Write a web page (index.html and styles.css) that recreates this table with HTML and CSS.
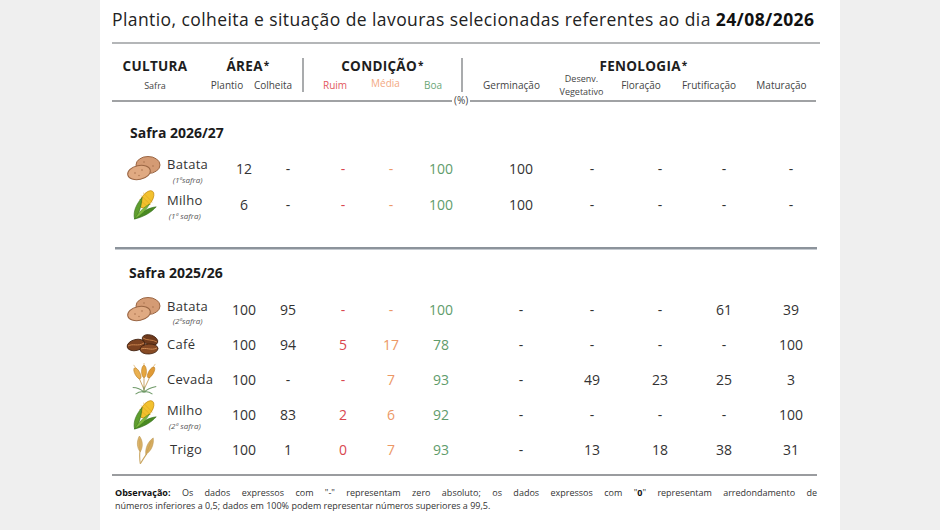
FILE: index.html
```html
<!DOCTYPE html>
<html lang="pt-BR">
<head>
<meta charset="utf-8">
<title>Plantio, colheita e situação de lavouras</title>
<link rel="stylesheet" href="styles.css">
</head>
<body>
<div class="page">
  <h1 class="title">Plantio, colheita e situação de lavouras selecionadas referentes ao dia <b>24/08/2026</b></h1>
  <div class="rule-top"></div>

  <div class="head">
    <div class="hc g1 grp">CULTURA</div>
    <div class="hc g2 grp area">ÁREA<span class="ast">*</span></div>
    <div class="vsep s1"></div>
    <div class="hc g3 grp">CONDIÇÃO<span class="ast">*</span></div>
    <div class="vsep s2"></div>
    <div class="hc g4 grp">FENOLOGIA<span class="ast">*</span></div>

    <div class="hc sub c1 tiny">Safra</div>
    <div class="hc sub c2">Plantio</div>
    <div class="hc sub c3">Colheita</div>
    <div class="hc sub c5 red">Ruim</div>
    <div class="hc sub c6 orange up">Média</div>
    <div class="hc sub c7 green">Boa</div>
    <div class="hc sub c9">Germinação</div>
    <div class="hc sub c10 two"><span>Desenv.</span><span>Vegetativo</span></div>
    <div class="hc sub c11">Floração</div>
    <div class="hc sub c12">Frutificação</div>
    <div class="hc sub c13">Maturação</div>
  </div>

  <div class="pct"><span class="pl pl-left"></span><span class="pt">(%)</span><span class="pl pl-right"></span></div>

  <section class="sec sec1">
    <h2 class="sec-title">Safra 2026/27</h2>
    <div class="rows rows-a">
      <div class="row">
        <div class="ic"><svg class="i-potato" viewBox="0 0 36 28" width="36" height="28"><ellipse cx="22" cy="11" rx="12" ry="8.5" fill="#d49b74" stroke="#9a6644" stroke-width="1"/><circle cx="18" cy="8" r=".8" fill="#a8724e"/><circle cx="27" cy="12" r=".8" fill="#a8724e"/><ellipse cx="13" cy="18.5" rx="11.5" ry="7" transform="rotate(-12 13 18.5)" fill="#e0aa82" stroke="#9a6644" stroke-width="1"/><circle cx="9" cy="19" r=".8" fill="#a8724e"/><circle cx="16" cy="16" r=".8" fill="#a8724e"/><circle cx="13" cy="21.5" r=".7" fill="#a8724e"/></svg></div>
        <div class="nm has-sub"><span class="n">Batata</span><span class="s">(1ªsafra)</span></div>
        <div class="v">12</div><div class="v">-</div>
        <div class="v red">-</div><div class="v orange">-</div><div class="v green">100</div>
        <div class="v">100</div><div class="v">-</div><div class="v">-</div><div class="v">-</div><div class="v">-</div>
      </div>
      <div class="row">
        <div class="ic"><svg viewBox="0 0 30 34" width="30" height="32"><ellipse cx="18" cy="12" rx="5.5" ry="10.5" transform="rotate(35 18 12)" fill="#f2c12e" stroke="#c98f12" stroke-width=".8"/><path d="M12 8 L22 18 M14 5 L24 15 M10 12 L19 20" stroke="#d9a21c" stroke-width=".6"/><path d="M5 33 C3 25 7 17 13 10 C12 18 11 26 5 33Z" fill="#5f9e2e" stroke="#2f6a18" stroke-width=".6"/><path d="M5 33 C13 31 22 27 28 20 C20 21 12 25 5 33Z" fill="#4a8a22" stroke="#2f6a18" stroke-width=".6"/><path d="M5 33 C8 27 14 21 21 17 C17 24 12 29 5 33Z" fill="#7db83e" stroke="#3d7a1e" stroke-width=".5"/></svg></div>
        <div class="nm has-sub"><span class="n">Milho</span><span class="s">(1ª safra)</span></div>
        <div class="v">6</div><div class="v">-</div>
        <div class="v red">-</div><div class="v orange">-</div><div class="v green">100</div>
        <div class="v">100</div><div class="v">-</div><div class="v">-</div><div class="v">-</div><div class="v">-</div>
      </div>
    </div>
  </section>

  <div class="sep"></div>

  <section class="sec sec2">
    <h2 class="sec-title">Safra 2025/26</h2>
    <div class="rows rows-b">
      <div class="row">
        <div class="ic"><svg viewBox="0 0 36 28" width="36" height="28"><ellipse cx="22" cy="11" rx="12" ry="8.5" fill="#d49b74" stroke="#9a6644" stroke-width="1"/><circle cx="18" cy="8" r=".8" fill="#a8724e"/><circle cx="27" cy="12" r=".8" fill="#a8724e"/><ellipse cx="13" cy="18.5" rx="11.5" ry="7" transform="rotate(-12 13 18.5)" fill="#e0aa82" stroke="#9a6644" stroke-width="1"/><circle cx="9" cy="19" r=".8" fill="#a8724e"/><circle cx="16" cy="16" r=".8" fill="#a8724e"/><circle cx="13" cy="21.5" r=".7" fill="#a8724e"/></svg></div>
        <div class="nm has-sub low"><span class="n">Batata</span><span class="s">(2ªsafra)</span></div>
        <div class="v">100</div><div class="v">95</div>
        <div class="v red">-</div><div class="v orange">-</div><div class="v green">100</div>
        <div class="v">-</div><div class="v">-</div><div class="v">-</div><div class="v">61</div><div class="v">39</div>
      </div>
      <div class="row">
        <div class="ic"><svg viewBox="0 0 36 24" width="36" height="24"><ellipse cx="24" cy="8" rx="8" ry="5" transform="rotate(18 24 8)" fill="#6e3a1c" stroke="#3e1e0c" stroke-width=".8"/><path d="M17 6 C21 9 26 7 31 10" stroke="#c07a45" stroke-width="1" fill="none"/><ellipse cx="10" cy="13" rx="9" ry="5.5" transform="rotate(-14 10 13)" fill="#7c4220" stroke="#3e1e0c" stroke-width=".8"/><path d="M2 14 C7 11 12 15 18 11" stroke="#c9834d" stroke-width="1" fill="none"/><ellipse cx="23" cy="17" rx="9" ry="5" transform="rotate(-4 23 17)" fill="#874a24" stroke="#3e1e0c" stroke-width=".8"/><path d="M15 17 C20 15 25 19 31 16" stroke="#d08c55" stroke-width="1" fill="none"/></svg></div>
        <div class="nm"><span class="n">Café</span></div>
        <div class="v">100</div><div class="v">94</div>
        <div class="v red">5</div><div class="v orange">17</div><div class="v green">78</div>
        <div class="v">-</div><div class="v">-</div><div class="v">-</div><div class="v">-</div><div class="v">100</div>
      </div>
      <div class="row">
        <div class="ic"><svg viewBox="0 0 30 34" width="30" height="32"><path d="M15 30 L15 14 M15 28 L8 12 M15 28 L23 11" stroke="#b98a3a" stroke-width=".8" fill="none"/><ellipse cx="15" cy="9" rx="2.6" ry="6.5" fill="#e5a640" stroke="#b77a1e" stroke-width=".6"/><ellipse cx="8" cy="11" rx="2.6" ry="6.5" transform="rotate(-28 8 11)" fill="#eab050" stroke="#b77a1e" stroke-width=".6"/><ellipse cx="22.5" cy="10" rx="2.6" ry="6.5" transform="rotate(30 22.5 10)" fill="#e09a36" stroke="#b77a1e" stroke-width=".6"/><path d="M15 3 L15 0 M6 5 L4 2 M25 4 L27 1" stroke="#d49a3a" stroke-width=".6"/><path d="M15 31 C11 27 7 26 3 26 M15 31 C19 27 23 26 28 25 M15 31 C12 30 9 31 6 33 M15 31 C18 30 21 31 24 33 M15 31 L15 25" stroke="#6f9a68" stroke-width="1.1" fill="none"/></svg></div>
        <div class="nm"><span class="n">Cevada</span></div>
        <div class="v">100</div><div class="v">-</div>
        <div class="v red">-</div><div class="v orange">7</div><div class="v green">93</div>
        <div class="v">-</div><div class="v">49</div><div class="v">23</div><div class="v">25</div><div class="v">3</div>
      </div>
      <div class="row">
        <div class="ic"><svg viewBox="0 0 30 34" width="30" height="32"><ellipse cx="18" cy="12" rx="5.5" ry="10.5" transform="rotate(35 18 12)" fill="#f2c12e" stroke="#c98f12" stroke-width=".8"/><path d="M12 8 L22 18 M14 5 L24 15 M10 12 L19 20" stroke="#d9a21c" stroke-width=".6"/><path d="M5 33 C3 25 7 17 13 10 C12 18 11 26 5 33Z" fill="#5f9e2e" stroke="#2f6a18" stroke-width=".6"/><path d="M5 33 C13 31 22 27 28 20 C20 21 12 25 5 33Z" fill="#4a8a22" stroke="#2f6a18" stroke-width=".6"/><path d="M5 33 C8 27 14 21 21 17 C17 24 12 29 5 33Z" fill="#7db83e" stroke="#3d7a1e" stroke-width=".5"/></svg></div>
        <div class="nm has-sub"><span class="n">Milho</span><span class="s">(2ª safra)</span></div>
        <div class="v">100</div><div class="v">83</div>
        <div class="v red">2</div><div class="v orange">6</div><div class="v green">92</div>
        <div class="v">-</div><div class="v">-</div><div class="v">-</div><div class="v">-</div><div class="v">100</div>
      </div>
      <div class="row">
        <div class="ic"><svg viewBox="0 0 26 34" width="24" height="32"><defs><filter id="soft" x="-20%" y="-20%" width="140%" height="140%"><feGaussianBlur stdDeviation=".6"/></filter></defs><g filter="url(#soft)"><path d="M9 33 C8 26 8 22 9 18" stroke="#c9a560" stroke-width="1.2" fill="none"/><path d="M9 33 C12 28 14 25 16 22" stroke="#c9a560" stroke-width="1.2" fill="none"/><path d="M9 20 C5 16 5 8 8 3 C12 8 12 15 9 20Z" fill="#dcb46a" stroke="#b8924a" stroke-width=".6"/><path d="M15 23 C14 17 17 9 23 5 C24 12 21 19 15 23Z" fill="#d6ad60" stroke="#b8924a" stroke-width=".6"/><path d="M8.5 6 L8.5 19 M16 21 L21 8" stroke="#bf9548" stroke-width=".5"/></g></svg></div>
        <div class="nm"><span class="n trigo">Trigo</span></div>
        <div class="v">100</div><div class="v">1</div>
        <div class="v red">0</div><div class="v orange">7</div><div class="v green">93</div>
        <div class="v">-</div><div class="v">13</div><div class="v">18</div><div class="v">38</div><div class="v">31</div>
      </div>
    </div>
  </section>

  <div class="rule-bottom"></div>

  <div class="obs">
    <p class="obs-l1"><b>Observação:</b> Os dados expressos com "-" representam zero absoluto; os dados expressos com "<b>0</b>" representam arredondamento de</p>
    <p class="obs-l2">números inferiores a 0,5; dados em 100% podem representar números superiores a 99,5.</p>
  </div>
</div>
</body>
</html>
```

FILE: styles.css
```css
* { box-sizing: border-box; }

html, body {
  margin: 0;
  padding: 0;
}

body {
  background: #efefef;
  font-family: "Open Sans", "Noto Sans", sans-serif;
  color: #333;
}

.page {
  width: 740px;
  height: 530px;
  margin: 0 auto;
  background: #fff;
  overflow: hidden;
}

.title {
  margin: 0;
  padding: 8px 0 0 12px;
  font-size: 17.5px;
  line-height: 22px;
  font-weight: 400;
  letter-spacing: 0.42px;
  color: #222;
  white-space: nowrap;
}

.title b { font-weight: 700; color: #111; }

.rule-top {
  margin: 12px 20px 0 12px;
  height: 2px;
  background: #b4b6b8;
}

/* Header */
.head {
  margin-top: 14px;
  display: grid;
  grid-template-columns: 110px 34px 58px 2px 62px 39px 56px 2px 97px 43px 76px 60px 85px;
  grid-template-rows: 16px 22px;
}

.hc {
  display: flex;
  justify-content: center;
  align-items: center;
  white-space: nowrap;
}

.grp {
  grid-row: 1;
  font-size: 13.5px;
  font-weight: 700;
  color: #1e1e1e;
  letter-spacing: 0.3px;
}
.grp .ast {
  font-size: 10px;
  align-self: flex-start;
  margin-left: 1px;
}

.g1 { grid-column: 1; }
.g2 { grid-column: 2 / 4; padding-right: 16px; }
.g3 { grid-column: 5 / 8; }
.g4 { grid-column: 9 / 14; }

.vsep {
  grid-row: 1 / 3;
  width: 1.5px;
  height: 34px;
  background: #a9abad;
  align-self: start;
}
.s1 { grid-column: 4; }
.s2 { grid-column: 8; }

.sub {
  grid-row: 2;
  font-size: 10px;
  color: #444;
}
.sub.tiny { font-size: 9px; }
.sub.up { padding-bottom: 4px; }
.sub.two {
  flex-direction: column;
  font-size: 9px;
  line-height: 12.4px;
  padding-top: 1px;
}

.c1 { grid-column: 1; }
.c2 { grid-column: 2; }
.c3 { grid-column: 3; }
.c5 { grid-column: 5; }
.c6 { grid-column: 6; }
.c7 { grid-column: 7; }
.c9 { grid-column: 9; }
.c10 { grid-column: 10; }
.c11 { grid-column: 11; }
.c12 { grid-column: 12; }
.c13 { grid-column: 13; }

.sub.red { color: #e2585e; }
.sub.orange { color: #f3a882; }
.sub.green { color: #6aa678; }

/* (%) rule */
.pct {
  height: 10px;
  margin: 0 24px 0 12px;
  display: flex;
  align-items: center;
}
.pl {
  height: 1.5px;
  background: #a0a2a4;
}
.pl-left { width: 340px; }
.pl-right { flex: 1; }
.pt {
  font-size: 10px;
  color: #444;
  padding: 0 2px;
  line-height: 10px;
  margin-top: -2px;
}

/* Sections */
.sec-title {
  margin: 0;
  padding-left: 30px;
  font-size: 14px;
  line-height: 18px;
  font-weight: 700;
  color: #1b1b1b;
}
.sec1 .sec-title { margin-top: 18px; }
.sec2 .sec-title { margin-top: 15px; padding-left: 29px; }

.rows-a { margin-top: 8px; }
.rows-b { margin-top: 9.5px; }

.row {
  display: grid;
  grid-template-columns: 67px 55px 44px 44px 66px 30px 70px 90px 52px 84px 44px 90px;
  align-items: center;
}
.rows-a .row { height: 36px; }
.rows-b .row { height: 35px; }

.ic {
  display: flex;
  justify-content: center;
  align-items: center;
  padding-left: 22px;
  padding-right: 1px;
}
.ic svg { display: block; }

.nm {
  display: flex;
  flex-direction: column;
  align-items: center;
  justify-self: start;
  white-space: nowrap;
}
.nm.has-sub { margin-top: 5.5px; }
.nm.has-sub.low { margin-top: 6.5px; }
.nm .n {
  font-size: 13px;
  line-height: 13px;
  color: #333;
  letter-spacing: 0.3px;
}
.nm .n.trigo { padding-left: 3px; }
.nm .s {
  font-size: 8px;
  line-height: 9px;
  margin-top: 3.5px;
  font-style: italic;
  color: #555;
}

.v {
  display: flex;
  justify-content: center;
  white-space: nowrap;
  font-size: 14px;
  color: #333;
}
.v.red { color: #d9474f; }
.v.orange { color: #ec9866; }
.v.green { color: #5f9c6c; }

.sep {
  margin: 25px 23px 0 15px;
  height: 2px;
  background: #8c939b;
  box-shadow: 0 1px 0 #c5cad0;
}

.rule-bottom {
  margin: 7px 23px 0 12px;
  height: 2.5px;
  background: #9a9c9f;
}

.obs {
  margin: 10px 23px 0 15px;
  font-size: 9px;
  line-height: 13px;
  color: #333;
}
.obs p { margin: 0; }
.obs b { font-weight: 700; color: #111; }
.obs-l1 {
  text-align: justify;
  text-align-last: justify;
}
```
